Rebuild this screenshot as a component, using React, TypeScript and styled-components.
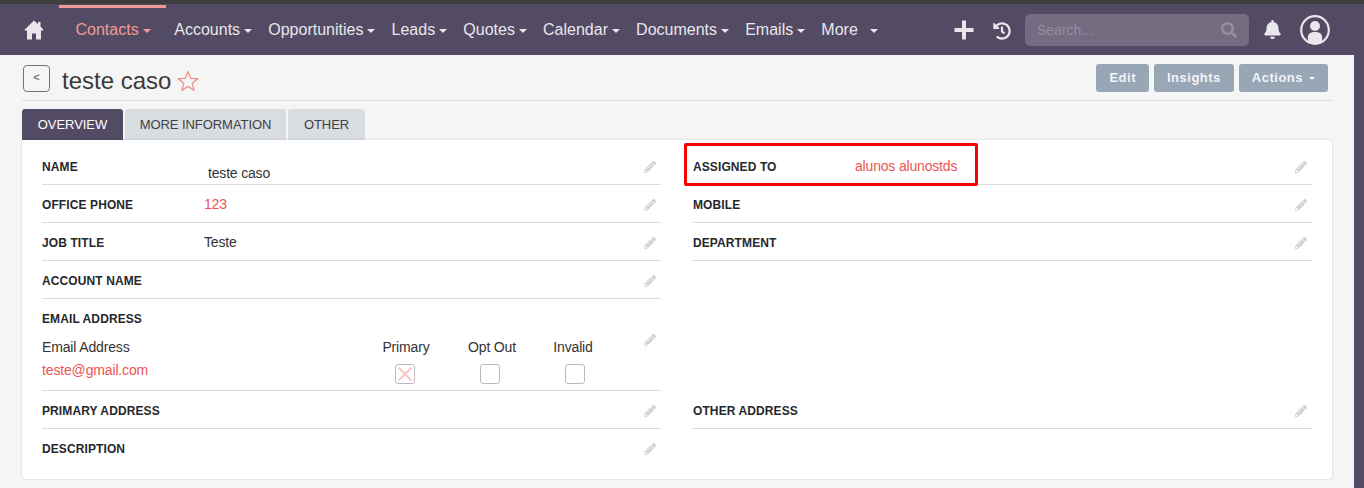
import React from 'react';
import styled, { createGlobalStyle } from 'styled-components';
import { FaHistory, FaSearch, FaBell, FaPencilAlt } from 'react-icons/fa';

const GlobalStyle = createGlobalStyle`
  html, body {
    margin: 0;
    padding: 0;
    background: #f5f5f5;
    font-family: "Liberation Sans", Arial, sans-serif;
    overflow: hidden;
  }
`;

const menus = ['Accounts', 'Opportunities', 'Leads', 'Quotes', 'Calendar', 'Documents', 'Emails'];

const Caret = () => <CaretMark />;

const Pencil = () => (
  <PencilSlot>
    <FaPencilAlt size={12} />
  </PencilSlot>
);

const App = () => {
  return (
    <Page>
      <GlobalStyle />
      <TopStrip />
      <Nav>
        <HomeLink>
          <svg width="20" height="20" viewBox="0 0 20 20">
            <path
              d="M10 0.500L0.500 9.800l1.200 1.200L3 9.900V19.500h5v-6h4v6h5V9.900l1.300 1.100 1.200-1.200L16.500 6.600V2h-2.500v2.200z"
              fill="#e9e7ec"
            />
          </svg>
        </HomeLink>
        <ActiveItem>
          Contacts
          <Caret />
        </ActiveItem>
        {menus.map((m) => (
          <NavItem key={m}>
            {m}
            <Caret />
          </NavItem>
        ))}
        <MoreItem>
          More
          <Caret />
        </MoreItem>
        <NavRight>
          <svg width="20" height="20" viewBox="0 0 20 20">
            <path d="M8 0.500h4v7.500h7.500v4H12v7.500H8V12H0.500V8H8z" fill="#e9e7ec" />
          </svg>
          <HistoryIcon>
            <FaHistory size={18} />
          </HistoryIcon>
          <SearchBox>
            <span>Search...</span>
            <FaSearch size={16} />
          </SearchBox>
          <BellIcon>
            <FaBell size={19} />
          </BellIcon>
          <svg width="30" height="30" viewBox="0 0 30 30">
            <circle cx="15" cy="15" r="13.800" fill="none" stroke="#e9e7ec" strokeWidth="2.200" />
            <circle cx="15" cy="11" r="5" fill="#e9e7ec" />
            <path d="M7.800 26.500V22.500c0-3.600 3-5.400 7.200-5.400s7.200 1.800 7.200 5.400v4c-2 1.300-4.500 2-7.200 2s-5.200-.7-7.200-2z" fill="#e9e7ec" />
          </svg>
        </NavRight>
      </Nav>

      <Main>
        <Content>
          <Header>
            <BackButton>&lt;</BackButton>
            <Title>teste caso</Title>
            <StarIcon width="22" height="22" viewBox="0 0 22 22">
              <path
                d="M11 1.800l2.700 6.500 7 .5-5.400 4.500 1.700 6.800-6-3.700-6 3.700 1.700-6.800L1.300 8.800l7-.5z"
                fill="none"
                stroke="#ee8a85"
                strokeWidth="1.200"
              />
            </StarIcon>
            <Actions>
              <ActionButton>Edit</ActionButton>
              <ActionButton>Insights</ActionButton>
              <ActionButton>
                Actions
                <ActionCaret />
              </ActionButton>
            </Actions>
          </Header>

          <Tabs>
            <Tab $active $width={101}>OVERVIEW</Tab>
            <Tab $width={161}>MORE INFORMATION</Tab>
            <Tab $width={77}>OTHER</Tab>
          </Tabs>

          <Card>
            <Highlight />
            <Row>
              <Cell>
                <Label>NAME</Label>
                <NameValue>teste caso</NameValue>
                <Pencil />
              </Cell>
              <Cell>
                <Label>ASSIGNED TO</Label>
                <Value $link>alunos alunostds</Value>
                <Pencil />
              </Cell>
            </Row>
            <Row>
              <Cell>
                <Label>OFFICE PHONE</Label>
                <Value $link>123</Value>
                <Pencil />
              </Cell>
              <Cell>
                <Label>MOBILE</Label>
                <Pencil />
              </Cell>
            </Row>
            <Row>
              <Cell>
                <Label>JOB TITLE</Label>
                <Value>Teste</Value>
                <Pencil />
              </Cell>
              <Cell>
                <Label>DEPARTMENT</Label>
                <Pencil />
              </Cell>
            </Row>
            <Row>
              <Cell>
                <Label>ACCOUNT NAME</Label>
                <Pencil />
              </Cell>
              <EmptyCell />
            </Row>
            <Row>
              <EmailCell>
                <Label>EMAIL ADDRESS</Label>
                <EmailGrid>
                  <EmailHead>Email Address</EmailHead>
                  <FlagHead>Primary</FlagHead>
                  <FlagHead>Opt Out</FlagHead>
                  <FlagHead>Invalid</FlagHead>
                  <EmailLink>teste@gmail.com</EmailLink>
                  <FlagBox $before={0} $after={2}>
                    <svg width="16" height="16" viewBox="0 0 16 16">
                      <path d="M1.500 1.500l13 13M14.500 1.500l-13 13" stroke="#f6c9c7" strokeWidth="2" />
                    </svg>
                  </FlagBox>
                  <FlagBox $before={0} $after={4} />
                  <FlagBox $before={4} $after={0} />
                </EmailGrid>
                <EmailPencil>
                  <FaPencilAlt size={12} />
                </EmailPencil>
              </EmailCell>
              <EmptyCell />
            </Row>
            <Row>
              <Cell>
                <Label>PRIMARY ADDRESS</Label>
                <Pencil />
              </Cell>
              <Cell>
                <Label>OTHER ADDRESS</Label>
                <Pencil />
              </Cell>
            </Row>
            <Row>
              <Cell $last>
                <Label>DESCRIPTION</Label>
                <Pencil />
              </Cell>
              <EmptyCell />
            </Row>
          </Card>
        </Content>
        <SideStrip />
      </Main>
    </Page>
  );
};

export default App;

const Page = styled.div`
  width: 1364px;
  height: 488px;
  overflow: hidden;
  display: flex;
  flex-direction: column;
`;

const TopStrip = styled.div`
  height: 4px;
  background: #3e3e3e;
`;

const Nav = styled.div`
  height: 51px;
  background: #534a63;
  display: flex;
  align-items: center;
  padding-left: 24px;
  color: #e9e7ec;
  font-size: 16px;
`;

const HomeLink = styled.div`
  display: flex;
  width: 35px;
`;

const CaretMark = styled.span`
  display: inline-block;
  width: 0;
  height: 0;
  margin-left: 4px;
  vertical-align: 2px;
  border-left: 4px solid transparent;
  border-right: 4px solid transparent;
  border-top: 4px solid currentColor;
`;

const NavItem = styled.div`
  height: 51px;
  line-height: 52px;
  padding: 0 7px;
  margin-right: 2.150px;
  white-space: nowrap;
`;

const ActiveItem = styled(NavItem)`
  position: relative;
  color: #f29a94;
  width: 107px;
  box-sizing: border-box;
  padding: 0 0 0 16.500px;
  margin-right: 1.300px;

  &::before {
    content: '';
    position: absolute;
    left: 0;
    right: 0;
    top: 1px;
    height: 3px;
    background: #f29a94;
  }
`;

const MoreItem = styled(NavItem)`
  ${CaretMark} {
    margin-left: 12px;
  }
`;

const NavRight = styled.div`
  margin-left: auto;
  display: flex;
  align-items: center;
  padding-right: 34px;
`;

const HistoryIcon = styled.div`
  display: flex;
  margin-left: 19px;
  transform: translateY(1px);
`;

const SearchBox = styled.div`
  width: 224px;
  height: 32px;
  margin-left: 14px;
  box-sizing: border-box;
  padding: 0 12px;
  display: flex;
  align-items: center;
  justify-content: space-between;
  border-radius: 5px;
  background: #756c82;
  color: #958da1;
  font-size: 14px;
`;

const BellIcon = styled.div`
  display: flex;
  margin: 0 18px 0 14px;
`;

const Main = styled.div`
  flex: 1;
  display: flex;
`;

const Content = styled.div`
  width: 1354px;
  box-sizing: border-box;
  padding: 0 22px;
`;

const SideStrip = styled.div`
  width: 10px;
  background: #534a63;
`;

const Header = styled.div`
  height: 46px;
  box-sizing: border-box;
  width: 1310px;
  display: flex;
  align-items: center;
  padding: 0 0 0 1px;
  border-bottom: 1px solid #dedede;
`;

const BackButton = styled.div`
  width: 27px;
  height: 27px;
  box-sizing: border-box;
  border: 1px solid #77757c;
  border-radius: 4px;
  margin: 2px 12px 0 0;
  color: #777;
  font-size: 11px;
  font-weight: bold;
  text-align: center;
  line-height: 22px;
`;

const Title = styled.h1`
  margin: 7px 6px 0 0;
  font-size: 24px;
  font-weight: normal;
  color: #3a3a3a;
`;

const StarIcon = styled.svg`
  margin-top: 6px;
`;

const Actions = styled.div`
  margin-left: auto;
  display: flex;
  gap: 5px;
  padding-right: 4px;
`;

const ActionButton = styled.div`
  height: 28px;
  line-height: 27px;
  padding: 0 13px;
  border-radius: 3px;
  background: #98a6b6;
  color: #f2f4f6;
  font-size: 13px;
  font-weight: bold;
  letter-spacing: 0.5px;
`;

const ActionCaret = styled(CaretMark)`
  margin-left: 6px;
  border-width: 3px 3px 0;
`;

const Tabs = styled.div`
  display: flex;
  gap: 2px;
  margin-top: 8px;
`;

const Tab = styled.div<{ $active?: boolean; $width: number }>`
  width: ${(p) => p.$width}px;
  height: 31px;
  line-height: 31px;
  text-align: center;
  font-size: 13px;
  letter-spacing: -0.06px;
  border-radius: 3px 3px 0 0;
  background: ${(p) => (p.$active ? '#534a63' : '#d8dde1')};
  color: ${(p) => (p.$active ? '#ffffff' : '#3f4145')};
`;

const Card = styled.div`
  position: relative;
  width: 1310px;
  height: 339px;
  box-sizing: border-box;
  padding: 7px 20px 0;
  background: #fff;
  border-radius: 0 4px 4px 4px;
  box-shadow: 0 0 2px rgba(0, 0, 0, 0.22);
`;

const Highlight = styled.div`
  position: absolute;
  left: 662px;
  top: 3px;
  width: 294px;
  height: 43px;
  box-sizing: border-box;
  border: 3px solid #f50000;
  border-radius: 2px;
`;

const Row = styled.div`
  display: grid;
  grid-template-columns: 619px 619px;
  column-gap: 32px;
`;

const Cell = styled.div<{ $last?: boolean }>`
  height: 38px;
  box-sizing: border-box;
  display: flex;
  align-items: center;
  border-bottom: ${(p) => (p.$last ? 'none' : '1px solid #dcdcdc')};
  padding-right: 5px;
`;

const EmptyCell = styled.div``;

const Label = styled.div`
  width: 162px;
  flex: none;
  padding-top: 2px;
  color: #26282c;
  font-size: 12px;
  font-weight: bold;
  letter-spacing: 0.1px;
`;

const Value = styled.div<{ $link?: boolean }>`
  color: ${(p) => (p.$link ? '#ec5454' : '#333')};
  font-size: 14px;
  letter-spacing: -0.18px;
`;

const NameValue = styled(Value)`
  padding: 14px 0 0 4px;
`;

const PencilSlot = styled.div`
  margin-left: auto;
  padding-top: 2px;
  display: flex;
  color: #cfd0d4;
`;

const EmailCell = styled.div`
  position: relative;
  height: 92px;
  box-sizing: border-box;
  border-bottom: 1px solid #dcdcdc;
  padding-top: 11px;
`;

const EmailPencil = styled.div`
  position: absolute;
  right: 5px;
  top: 35px;
  display: flex;
  color: #cfd0d4;
`;

const EmailGrid = styled.div`
  display: grid;
  grid-template-columns: 323px 82px 90px 72px;
  grid-template-rows: 23px 23px;
  margin-top: 12px;
  font-size: 14px;
  letter-spacing: -0.15px;
  color: #333;
`;

const EmailHead = styled.div`
  line-height: 18px;
`;

const FlagHead = styled.div`
  line-height: 18px;
  text-align: center;
`;

const EmailLink = styled.div`
  color: #ec5454;
  line-height: 18px;
`;

const FlagBox = styled.div<{ $before: number; $after: number }>`
  width: 20px;
  height: 20px;
  box-sizing: border-box;
  margin: 0 ${(p) => p.$after}px 0 ${(p) => p.$before}px;
  justify-self: center;
  align-self: end;
  display: flex;
  align-items: center;
  justify-content: center;
  border: 1px solid #b9b9c0;
  border-radius: 3px;
  background: #fff;
`;
